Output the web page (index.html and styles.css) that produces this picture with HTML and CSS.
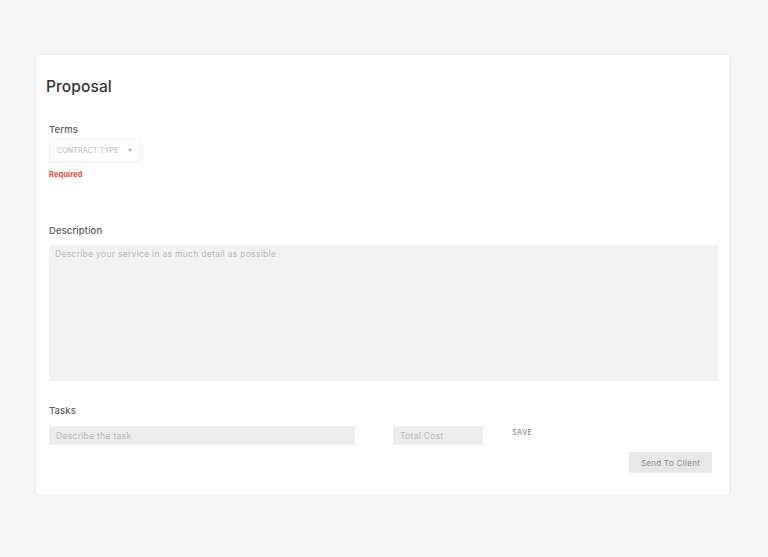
FILE: index.html
```html
<!DOCTYPE html>
<html>
<head>
<meta charset="utf-8">
<link rel="stylesheet" href="styles.css">
</head>
<body>
<div class="card">
  <h1 class="title">Proposal</h1>
  <div class="form">
    <div class="label terms-label">Terms</div>
    <div class="select">
      <span class="select-text">CONTRACT TYPE</span>
      <span class="caret"></span>
    </div>
    <div class="required">Required</div>
    <div class="label desc-label">Description</div>
    <div class="textarea"><span class="ph">Describe your service in as much detail as possible</span></div>
    <div class="label tasks-label">Tasks</div>
    <div class="task-row">
      <div class="input task-input"><span class="ph">Describe the task</span></div>
      <div class="input cost-input"><span class="ph">Total Cost</span></div>
      <div class="save">SAVE</div>
    </div>
    <div class="actions">
      <div class="send-btn">Send To Client</div>
    </div>
  </div>
</div>
</body>
</html>
```

FILE: styles.css
```css
html, body {
  margin: 0;
  padding: 0;
  background: #f6f6f6;
  font-family: "Inter", "Open Sans", sans-serif;
}
body {
  padding-top: 55px;
  padding-left: 36px;
}
.card {
  width: 693px;
  box-sizing: border-box;
  background: #ffffff;
  padding: 22px 11px 21px 10px;
  box-shadow: 0 1px 5px rgba(0,0,0,0.09);
  border-radius: 2px;
}
.title {
  margin: 0;
  font-size: 15.5px;
  line-height: 20px;
  font-weight: 500;
  color: #333333;
  letter-spacing: 0.1px;
}
.form {
  padding-left: 3px;
}
.label {
  font-size: 9.5px;
  line-height: 14px;
  font-weight: 500;
  color: #5a5a5a;
  letter-spacing: 0.1px;
}
.terms-label { margin-top: 26px; }
.select {
  margin-top: 2px;
  width: 92px;
  height: 23px;
  box-sizing: border-box;
  border: 1px solid #f0f0f0;
  border-radius: 2px;
  box-shadow: 0 1px 2px rgba(0,0,0,0.04);
  display: flex;
  align-items: center;
  padding-left: 7px;
  padding-right: 8px;
  justify-content: space-between;
}
.select-text {
  font-size: 7px;
  color: #b0b0b0;
  letter-spacing: 0.2px;
  white-space: nowrap;
  overflow: hidden;
  width: 64px;
}
.caret {
  width: 0;
  height: 0;
  border-left: 2.5px solid transparent;
  border-right: 2.5px solid transparent;
  border-top: 3px solid #aaaaaa;
}
.required {
  margin-top: 8px;
  font-size: 7.5px;
  line-height: 10px;
  font-weight: 700;
  color: #e8493c;
  letter-spacing: 0.1px;
}
.desc-label { margin-top: 44px; }
.textarea {
  margin-top: 7px;
  height: 136px;
  background: #f2f2f2;
  padding: 1px 6px;
  box-sizing: border-box;
  line-height: 10px;
}
.ph {
  font-size: 8.5px;
  line-height: 10px;
  color: #b8b8b8;
  letter-spacing: 0.3px;
}
.tasks-label { margin-top: 23px; }
.task-row {
  margin-top: 8px;
  display: flex;
  align-items: center;
}
.input {
  height: 19px;
  background: #ececec;
  box-sizing: border-box;
  padding-left: 7px;
  display: flex;
  align-items: center;
}
.task-input { width: 306px; }
.cost-input { width: 90px; margin-left: 38px; }
.save {
  margin-left: 29px;
  font-size: 7.5px;
  color: #777777;
  align-self: flex-start;
  margin-top: 2px;
  letter-spacing: 0.3px;
}
.actions {
  display: flex;
  justify-content: flex-end;
  margin-top: 7px;
  padding-right: 6px;
}
.send-btn {
  width: 83px;
  height: 21px;
  background: #e8e8e8;
  border-radius: 2px;
  font-size: 8px;
  color: #888888;
  letter-spacing: 0.3px;
  display: flex;
  align-items: center;
  justify-content: center;
}
```
